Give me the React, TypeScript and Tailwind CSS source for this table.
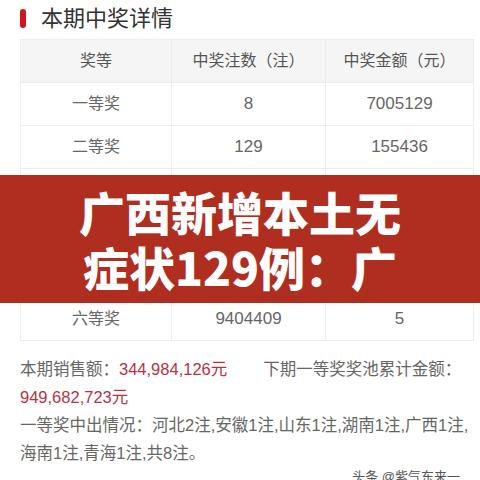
import React from "react";

const FONT = { fontFamily: '"Liberation Sans", "Noto Sans CJK SC", sans-serif' };

const rows = [
  ["一等奖", "8", "7005129"],
  ["二等奖", "129", "155436"],
  ["三等奖", "1624", "3000"],
  ["四等奖", "80632", "200"],
  ["五等奖", "1496813", "10"],
  ["六等奖", "9404409", "5"],
];

export default function App() {
  return (
    <div className="relative w-[480px] h-[480px] overflow-hidden bg-white" style={FONT}>
      <div className="flex items-center h-[37px] pl-[20px] gap-[15px] mb-[2px]">
        <div className="w-[6px] h-[19px] rounded-[3px] bg-[#d0161f]" />
        <div className="text-[22px] text-[#333] leading-none">本期中奖详情</div>
      </div>

      <div className="ml-[20px] w-[454px] border border-[#ececec]">
        <div className="grid grid-cols-[151px_154px_1fr] h-[42px] bg-[#f5f5f5] text-[16px] text-[#555]">
          <div className="flex items-center justify-center border-r border-[#ececec]">奖等</div>
          <div className="flex items-center justify-center border-r border-[#ececec]">中奖注数（注）</div>
          <div className="flex items-center justify-center">中奖金额（元）</div>
        </div>
        {rows.map((r, i) => (
          <div
            key={i}
            className="grid grid-cols-[151px_154px_1fr] h-[43px] border-t border-[#ececec] text-[16px] text-[#666]"
          >
            <div className="flex items-center justify-center border-r border-[#ececec]">{r[0]}</div>
            <div className="flex items-center justify-center border-r border-[#ececec] text-[17px]">{r[1]}</div>
            <div className="flex items-center justify-center text-[17px]">{r[2]}</div>
          </div>
        ))}
      </div>

      <div className="mt-[14px] pl-[20px] text-[16.5px] leading-[28px] text-[#666]">
        <div>
          本期销售额：<span className="text-[#b8323e]">344,984,126元</span>
          <span className="ml-[36px]">下期一等奖奖池累计金额：</span>
        </div>
        <div className="text-[#b8323e]">949,682,723元</div>
        <div>一等奖中出情况：河北2注,安徽1注,山东1注,湖南1注,广西1注,</div>
        <div>海南1注,青海1注,共8注。</div>
      </div>

      <div className="absolute right-[20px] top-[470px] text-[13px] text-[#555] leading-none">
        头条 @紫气东来一
      </div>

      <div className="absolute left-0 top-[175px] w-[480px] h-[128px] bg-[#b02e1f] flex flex-col items-center justify-center">
        <div
          className="text-white text-[46px] font-black leading-[55px]"
          style={{ fontFamily: '"Noto Sans CJK SC", sans-serif' }}
        >
          广西新增本土无
        </div>
        <div
          className="text-white text-[46px] font-black leading-[55px]"
          style={{ fontFamily: '"Noto Sans CJK SC", sans-serif' }}
        >
          症状129例：广
        </div>
      </div>
    </div>
  );
}
